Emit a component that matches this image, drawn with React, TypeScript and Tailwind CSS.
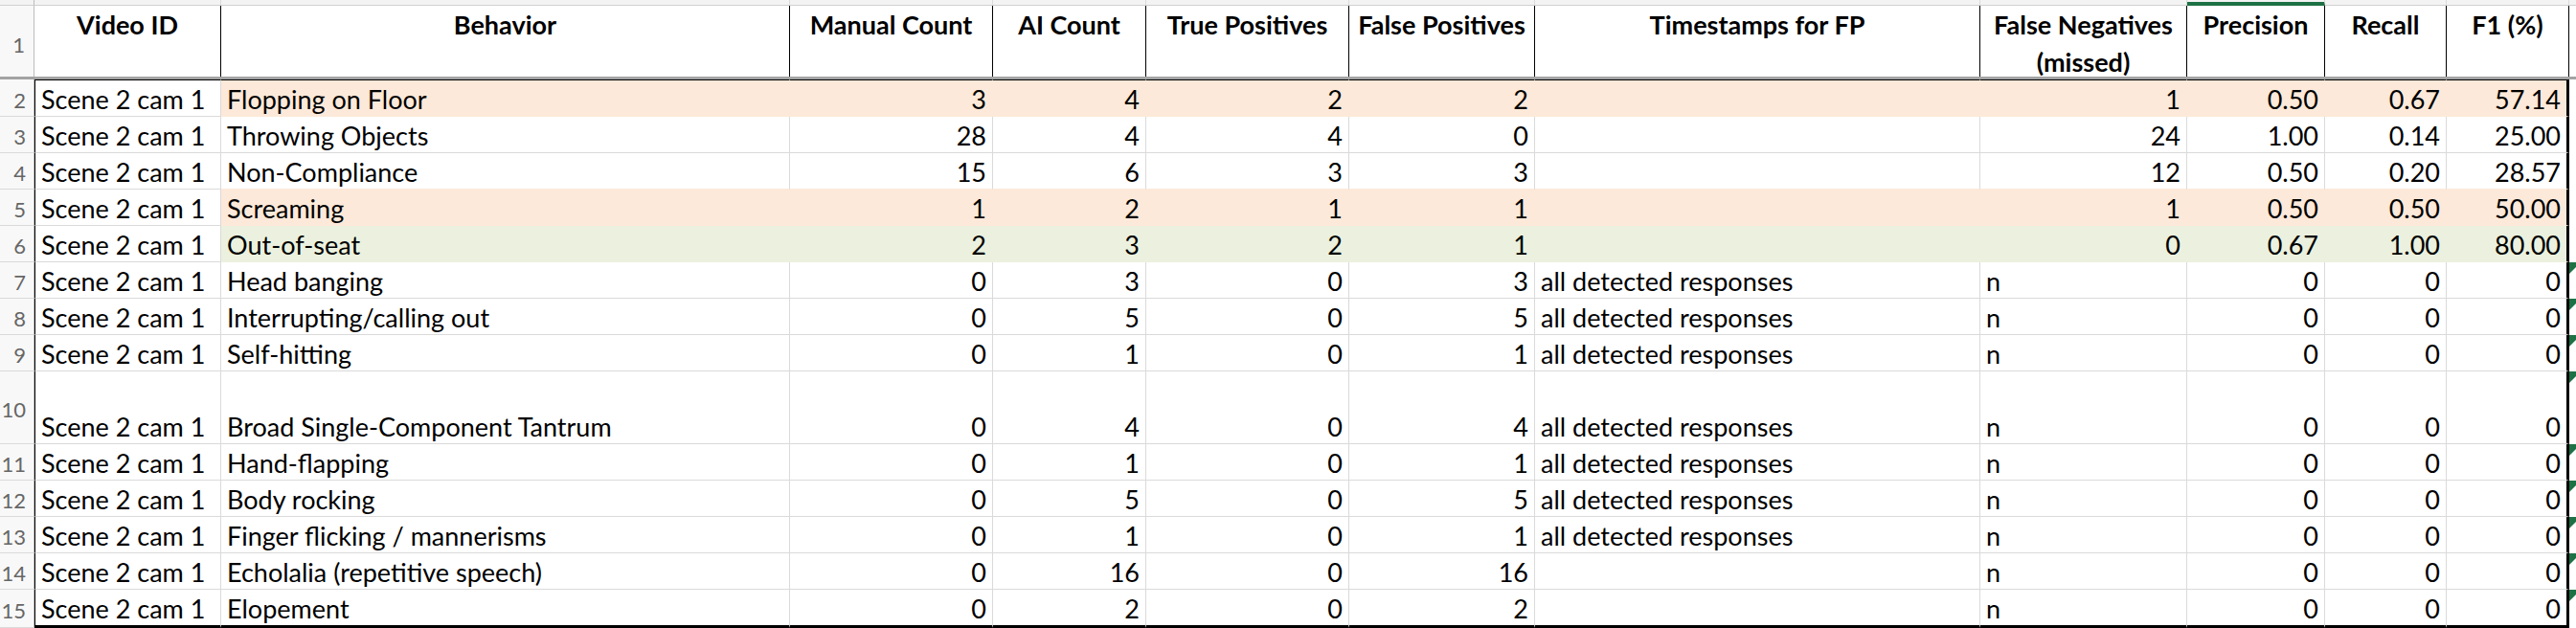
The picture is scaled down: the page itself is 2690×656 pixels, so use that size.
import React from 'react';

type Fill = 'peach' | 'green';

interface SheetRow {
  n: number;
  behavior: string;
  values: (string | number)[];
  fill?: Fill;
  tall?: boolean;
  flag?: boolean;
}

const columns = [
  { title: 'Video ID', w: 'w-[195px]' },
  { title: 'Behavior', w: 'w-[594px]' },
  { title: 'Manual Count', w: 'w-[212px]' },
  { title: 'AI Count', w: 'w-[160px]' },
  { title: 'True Positives', w: 'w-[212px]' },
  { title: 'False Positives', w: 'w-[194px]' },
  { title: 'Timestamps for FP', w: 'w-[465px]' },
  { title: 'False Negatives (missed)', w: 'w-[216px]' },
  { title: 'Precision', w: 'w-[144px]' },
  { title: 'Recall', w: 'w-[127px]' },
  { title: 'F1 (%)', w: 'w-[128px]' },
];

const ALL = 'all detected responses';

const rows: SheetRow[] = [
  { n: 2, behavior: 'Flopping on Floor', values: [3, 4, 2, 2, '', 1, '0.50', '0.67', '57.14'], fill: 'peach' },
  { n: 3, behavior: 'Throwing Objects', values: [28, 4, 4, 0, '', 24, '1.00', '0.14', '25.00'] },
  { n: 4, behavior: 'Non-Compliance', values: [15, 6, 3, 3, '', 12, '0.50', '0.20', '28.57'] },
  { n: 5, behavior: 'Screaming', values: [1, 2, 1, 1, '', 1, '0.50', '0.50', '50.00'], fill: 'peach' },
  { n: 6, behavior: 'Out-of-seat', values: [2, 3, 2, 1, '', 0, '0.67', '1.00', '80.00'], fill: 'green' },
  { n: 7, behavior: 'Head banging', values: [0, 3, 0, 3, ALL, 'n', 0, 0, 0], flag: true },
  { n: 8, behavior: 'Interrupting/calling out', values: [0, 5, 0, 5, ALL, 'n', 0, 0, 0], flag: true },
  { n: 9, behavior: 'Self-hitting', values: [0, 1, 0, 1, ALL, 'n', 0, 0, 0], flag: true },
  { n: 10, behavior: 'Broad Single-Component Tantrum', values: [0, 4, 0, 4, ALL, 'n', 0, 0, 0], flag: true, tall: true },
  { n: 11, behavior: 'Hand-flapping', values: [0, 1, 0, 1, ALL, 'n', 0, 0, 0], flag: true },
  { n: 12, behavior: 'Body rocking', values: [0, 5, 0, 5, ALL, 'n', 0, 0, 0], flag: true },
  { n: 13, behavior: 'Finger flicking / mannerisms', values: [0, 1, 0, 1, ALL, 'n', 0, 0, 0], flag: true },
  { n: 14, behavior: 'Echolalia (repetitive speech)', values: [0, 16, 0, 16, '', 'n', 0, 0, 0], flag: true },
  { n: 15, behavior: 'Elopement', values: [0, 2, 0, 2, '', 'n', 0, 0, 0], flag: true },
];

const fillBg: Record<Fill, string> = { peach: 'bg-[#fde9d9]', green: 'bg-[#ebf1de]' };
const fillBorderR: Record<Fill, string> = { peach: 'border-r-[#fde9d9]', green: 'border-r-[#ebf1de]' };
const fillBorderB: Record<Fill, string> = { peach: 'border-b-[#fde9d9]', green: 'border-b-[#ebf1de]' };

const isNumeric = (v: string | number) => typeof v === 'number' || /^\d+(\.\d+)?$/.test(v);

function rowHeight(row: SheetRow, last: boolean) {
  if (row.n === 2) return 'h-[39px]';
  if (last) return 'h-[40px]';
  if (row.tall) return 'h-[76px]';
  return 'h-[38px]';
}

function ErrorFlag() {
  return (
    <svg width="7" height="12" viewBox="0 0 7 12" className="block">
      <polygon points="0,0 12,0 0,12" fill="#1e7145" />
    </svg>
  );
}

export default function App() {
  return (
    <div className="w-[2690px] h-[656px] overflow-hidden bg-white text-black font-['Lato',sans-serif] text-[27px]">
      {/* column letter strip (scrolled off) */}
      <div className="flex h-[6px]">
        <div className="w-[36px] shrink-0 bg-[#f3f3f3] border-r border-r-[#bdbdbd] border-b border-b-[#d0d0d0]" />
        {columns.map((col) => (
          <div
            key={col.title}
            className={`${col.w} shrink-0 bg-[#f3f3f3] border-r border-r-[#dadada] ${
              col.title === 'Precision' ? 'border-b-[4px] border-b-[#1e7145]' : 'border-b border-b-[#d0d0d0]'
            }`}
          />
        ))}
        <div className="flex-1 bg-[#f3f3f3] border-b border-b-[#d0d0d0]" />
      </div>

      {/* header row */}
      <div className="flex h-[74px]">
        <div className="w-[36px] shrink-0 pt-[28px] pr-[9px] text-right bg-[#f8f8f8] border-r border-r-[#bdbdbd] text-[22px] leading-[26px] text-[#666]">
          1
        </div>
        {columns.map((col) => (
          <div
            key={col.title}
            className={`${col.w} shrink-0 overflow-hidden border-r border-r-black px-[2px] text-center font-bold leading-[39px]`}
          >
            {col.title}
          </div>
        ))}
        <div className="flex-1" />
      </div>

      {/* frozen pane line */}
      <div className="h-[3px] bg-[#a3a3a3]" />

      {rows.map((row, i) => {
        const last = i === rows.length - 1;
        const next = rows[i + 1];
        const cells: (string | number)[] = ['Scene 2 cam 1', row.behavior, ...row.values];

        return (
          <div key={row.n} className={`flex ${rowHeight(row, last)}`}>
            <div className="w-[36px] shrink-0 flex items-center justify-end pt-[5px] pr-[8px] bg-[#f8f8f8] border-r border-r-[#bdbdbd] border-b border-b-[#dadada] text-[22px] text-[#666] leading-[26px]">
              {row.n}
            </div>

            {cells.map((value, ci) => {
              const filled = row.fill && ci >= 1 ? row.fill : undefined;
              const numeric = ci >= 2 && isNumeric(value);

              let right = 'border-r border-r-[#dadada]';
              if (ci === 10) right = 'border-r-[3px] border-r-black';
              else if (filled) right = `border-r ${fillBorderR[filled]}`;

              let bottom = 'border-b border-b-[#dadada]';
              if (last) bottom = 'border-b-[3px] border-b-black';
              else if (filled) bottom = `border-b ${fillBorderB[filled]}`;
              else if (next?.fill && ci >= 1) bottom = `border-b ${fillBorderB[next.fill]}`;

              return (
                <div
                  key={ci}
                  className={`${columns[ci].w} shrink-0 flex items-end whitespace-nowrap leading-[35px] ${
                    numeric ? 'justify-end pr-[6px]' : 'justify-start pl-[6px]'
                  } ${filled ? fillBg[filled] : 'bg-white'} ${right} ${bottom} ${
                    row.n === 2 ? 'border-t border-t-black' : ''
                  } ${ci === 0 ? 'border-l border-l-black' : ''}`}
                >
                  {value}
                </div>
              );
            })}

            <div className="flex-1 bg-white">{row.flag && <ErrorFlag />}</div>
          </div>
        );
      })}
    </div>
  );
}
